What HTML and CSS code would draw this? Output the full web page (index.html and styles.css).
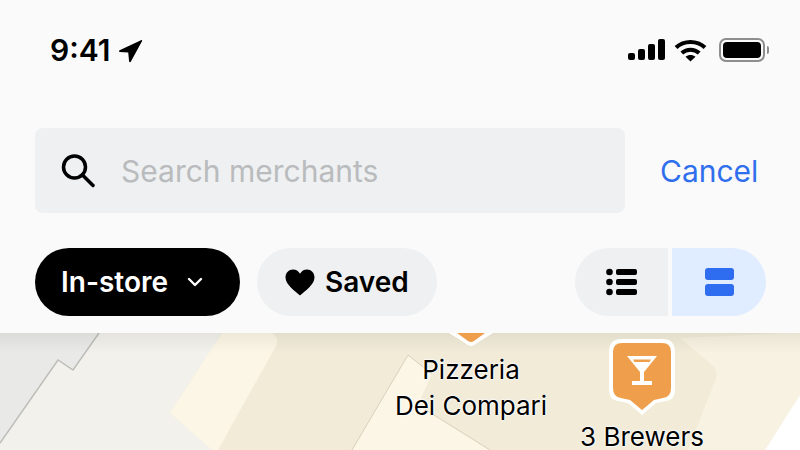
FILE: index.html
```html
<!DOCTYPE html>
<html lang="en">

<head>
    <meta charset="UTF-8">
    <title>Search merchants</title>
    <link rel="stylesheet" href="styles.css">
</head>

<body>
    <header class="top">
        <div class="status">
            <div class="status-left">
                <span class="time">9:41</span>
                <svg class="arrow" width="26" height="26" viewBox="0 0 26 26">
                    <path d="M24 2.2 2.6 12.2c-1 .5-.7 1.7.3 1.8l8.3.6.9 8.7c.1 1 1.3 1.2 1.8.3L25 3.300c.4-.8-.3-1.500-1-1.100z" />
                </svg>
            </div>
            <div class="status-right">
                <svg width="37" height="22" viewBox="0 0 37 22">
                    <rect x="0" y="14" width="7" height="7" rx="2" />
                    <rect x="10" y="10" width="7" height="11" rx="2" />
                    <rect x="20" y="5" width="7" height="16" rx="2" />
                    <rect x="30" y="0" width="7" height="21" rx="2" />
                </svg>
                <svg class="wifi" width="33" height="23" viewBox="0 0 33 23" fill="none" stroke="#000" stroke-width="4">
                    <path d="M2 8.500C10 1 23 1 31 8.500" />
                    <path d="M7.800 14C12.800 9.500 20.200 9.500 25.200 14" />
                    <path d="M16.500 22.500 11.500 17.800C14.500 15.300 18.500 15.300 21.500 17.800z" fill="#000" stroke="none" />
                </svg>
                <div class="battery">
                    <div class="battery-fill"></div>
                </div>
                <div class="battery-cap"></div>
            </div>
        </div>

        <div class="search-row">
            <div class="search-box">
                <svg width="40" height="40" viewBox="0 0 40 40" fill="none" stroke="#000" stroke-width="3.500" stroke-linecap="round">
                    <circle cx="16.500" cy="16" r="11" />
                    <path d="M24.500 24 35 34.500" />
                </svg>
                <span class="placeholder">Search merchants</span>
            </div>
            <span class="cancel">Cancel</span>
        </div>

        <div class="filter-row">
            <div class="chip chip-dark">
                <span>In-store</span>
                <svg width="16" height="10" viewBox="0 0 16 10" fill="none" stroke="#fff" stroke-width="2.400" stroke-linecap="round" stroke-linejoin="round">
                    <path d="M2 2 8 8 14 2" />
                </svg>
            </div>
            <div class="chip chip-light">
                <svg width="30" height="27" viewBox="0 0 30 27">
                    <path d="M15 26.500C10 22 .5 15.500.5 8.500.5 3.500 4 .5 8 .5c3 0 5.500 1.500 7 4.300C16.500 2 19 .5 22 .5c4 0 7.500 3 7.500 8 0 7-9.500 13.500-14.500 18z" />
                </svg>
                <span>Saved</span>
            </div>
            <div class="toggle">
                <div class="toggle-btn toggle-list">
                    <svg width="32" height="28" viewBox="0 0 32 28">
                        <circle cx="3.500" cy="4" r="3.300" />
                        <circle cx="3.500" cy="14" r="3.300" />
                        <circle cx="3.500" cy="24" r="3.300" />
                        <rect x="10" y="1" width="21" height="6" rx="2" />
                        <rect x="10" y="11" width="21" height="6" rx="2" />
                        <rect x="10" y="21" width="21" height="6" rx="2" />
                    </svg>
                </div>
                <div class="toggle-btn toggle-map">
                    <svg width="29" height="28" viewBox="0 0 29 28" fill="#2f6df0">
                        <rect x="0" y="0" width="29" height="12" rx="3" />
                        <rect x="0" y="16" width="29" height="12" rx="3" />
                    </svg>
                </div>
            </div>
        </div>
    </header>

    <main class="map">
        <svg class="map-bg" width="800" height="117" viewBox="0 333 800 117">
            <rect x="0" y="333" width="800" height="117" fill="#f1ebd8" />
            <path d="M0 333H99L73 370 58 360 0 443z" fill="#e9e9e7" />
            <path d="M99 333H222L170 413 212 450H0V443L58 360 73 370z" fill="#f2f1ec" />
            <path d="M99 333 73 370 58 360 0 443" fill="none" stroke="#bdbdb9" stroke-width="1.500" />
            <path d="M222 333H272Q279 338 276 346L218 450H212L170 413z" fill="#fcf6e6" />
            <path d="M408 355 432 374 418 405 490 450H352z" fill="#fcf6e6" />
            <path d="M352 450 408 355 432 374M418 405 490 450" fill="none" stroke="#d8d0ba" stroke-width="1" />
            <path d="M688 450 716 378Q718 370 712 365L680 338 790 333H800V395L765 450z" fill="#f7f2e1" />
            <path d="M800 395 765 450H800z" fill="#fff" />
        </svg>
        <div class="shade"></div>

        <div class="pin pin-cut">
            <svg width="60" height="16" viewBox="0 0 60 16">
                <path d="M8 0 24 10Q30 16 36 10L52 0z" fill="#fff" />
                <path d="M16 0 27 8Q30 10 33 8L44 0z" fill="#ef9f4c" />
            </svg>
        </div>
        <div class="label label-pizzeria">Pizzeria<br>Dei Compari</div>

        <div class="pin pin-brewers">
            <svg width="68" height="78" viewBox="0 0 68 78">
                <path d="M14 1H54Q67 1 67 14V52Q67 62 58 63L48 65 34 77 20 65 10 63Q1 62 1 52V14Q1 1 14 1z" fill="#fff" />
                <path d="M14 5H54Q63 5 63 14V50Q63 59 55 60L46 62 34 72 22 62 13 60Q5 59 5 50V14Q5 5 14 5z" fill="#ef9f4c" />
                <path d="M19 18H49L36 34V43H44V47H24V43H32V34zM25 21.500 26.500 24H41.500L43 21.500z" fill="#fff" fill-rule="evenodd" />
            </svg>
        </div>
        <div class="label label-brewers">3 Brewers</div>
    </main>
</body>

</html>
```

FILE: styles.css
```css
html,
body {
    margin: 0;
    padding: 0;
}

body {
    width: 800px;
    height: 450px;
    overflow: hidden;
    background-color: #fafafa;
    color: #000;
    font-family: Inter, "Liberation Sans", sans-serif;
}

.top {
    height: 333px;
    box-sizing: border-box;
    padding: 32px 34px 0 35px;
    background-color: #fafafa;
}

.status {
    display: flex;
    justify-content: space-between;
    align-items: center;
    height: 36px;
    padding-left: 15px;
}

.status-left {
    display: flex;
    align-items: center;
    gap: 7px;
}

.time {
    font-size: 30px;
    font-weight: 600;
    line-height: 36px;
}

.arrow {
    margin-top: 1px;
}

.status-right {
    display: flex;
    align-items: center;
    margin-right: -3px;
}

.wifi {
    margin-left: 9px;
}

.battery {
    box-sizing: border-box;
    width: 46px;
    height: 24px;
    margin-left: 12px;
    padding: 2px;
    border: 2px solid #8e8e8e;
    border-radius: 7px;
}

.battery-fill {
    height: 100%;
    border-radius: 4px;
    background-color: #000;
}

.battery-cap {
    width: 2px;
    height: 8px;
    margin-left: 2px;
    border-radius: 0 2px 2px 0;
    background-color: #8e8e8e;
}

.search-row {
    display: flex;
    align-items: center;
    margin-top: 60px;
}

.search-box {
    display: flex;
    align-items: center;
    gap: 23px;
    width: 590px;
    height: 85px;
    box-sizing: border-box;
    padding-left: 23px;
    border-radius: 8px;
    background-color: #eef0f2;
}

.placeholder {
    font-size: 30px;
    color: #b9bbbd;
}

.cancel {
    margin-left: 35px;
    font-size: 30px;
    color: #2f6fed;
}

.filter-row {
    display: flex;
    align-items: center;
    gap: 17px;
    margin-top: 35px;
}

.chip {
    display: flex;
    align-items: center;
    height: 68px;
    box-sizing: border-box;
    border-radius: 34px;
    font-size: 28px;
    font-weight: 600;
}

.chip-dark {
    width: 205px;
    gap: 19px;
    padding-left: 26px;
    background-color: #000;
    color: #fff;
}

.chip-light {
    width: 180px;
    gap: 10px;
    padding-left: 28px;
    background-color: #eef0f2;
}

.toggle {
    display: flex;
    gap: 4px;
    margin-left: auto;
    margin-right: 0;
}

.toggle-btn {
    display: flex;
    align-items: center;
    justify-content: center;
    height: 68px;
}

.toggle-list {
    width: 93px;
    border-radius: 34px 0 0 34px;
    background-color: #eef0f2;
}

.toggle-map {
    width: 94px;
    border-radius: 0 34px 34px 0;
    background-color: #e0ecff;
}

.map {
    position: relative;
    height: 117px;
    overflow: hidden;
}

.map-bg {
    display: block;
}

.shade {
    position: absolute;
    top: 0;
    left: 0;
    width: 100%;
    height: 20px;
    background: linear-gradient(rgba(0, 0, 0, 0.06), rgba(0, 0, 0, 0));
}

.pin {
    position: absolute;
}

.pin svg {
    display: block;
}

.pin-cut {
    left: 441px;
    top: 0;
}

.pin-brewers {
    left: 608px;
    top: 5px;
}

.label {
    position: absolute;
    font-size: 26px;
    line-height: 36px;
    text-align: center;
    white-space: nowrap;
    transform: translateX(-50%);
    text-shadow: 0 0 2px #fff, 0 0 2px #fff, 0 0 3px #fff;
}

.label-pizzeria {
    left: 471px;
    top: 19px;
}

.label-brewers {
    left: 642px;
    top: 86px;
}
```
